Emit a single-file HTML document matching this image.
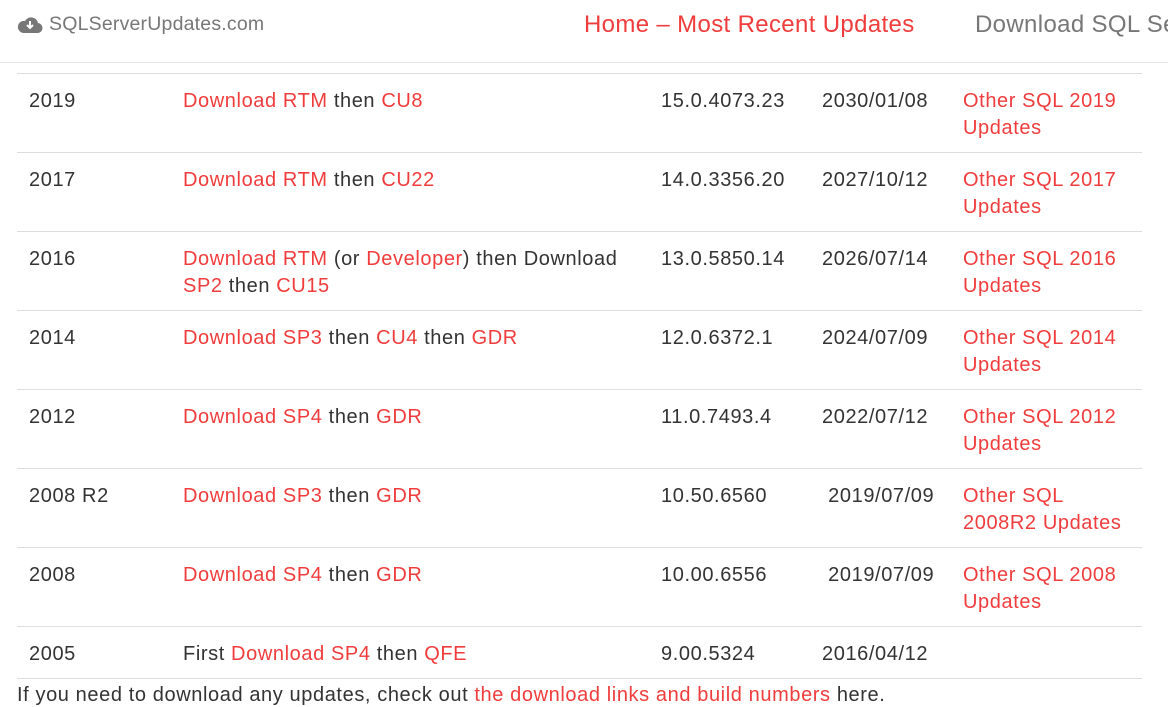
<!DOCTYPE html>
<html><head><meta charset="utf-8"><style>
body{margin:0;width:1168px;height:690px;overflow:hidden;background:#fff;font-family:"Liberation Sans",sans-serif;color:#333;position:relative}
.hdr{position:absolute;left:0;top:0;width:1168px;height:62px;border-bottom:1px solid #e7e7e7}
.logo{position:absolute;left:49px;top:13px;font-size:19.5px;color:#777;letter-spacing:0.2px}
.nav1{position:absolute;left:584px;top:11px;font-size:24px;color:#f03c3c;white-space:nowrap;letter-spacing:0.35px}
.nav2{position:absolute;left:975px;top:11px;font-size:24px;color:#777;white-space:nowrap;letter-spacing:0.35px}
table{position:absolute;left:17px;top:73px;width:1125px;border-collapse:collapse;font-size:20px;line-height:27px;letter-spacing:0.6px}
td{border-top:1px solid #ddd;vertical-align:top;padding:14px 0 10px 12px;box-sizing:border-box}
a{color:#f03c3c;text-decoration:none}
.foot{position:absolute;left:17px;top:684px;font-size:20px;letter-spacing:0.6px;color:#333;white-space:nowrap}
</style></head><body>
<div class="hdr">
<svg style="position:absolute;left:17px;top:15px" width="26" height="20" viewBox="0 0 26 20"><path d="M6 18h14a5 5 0 0 0 1-10 7 7 0 0 0-13-2 6 6 0 0 0-2 12z" fill="#777"/><path d="M13 6v7M10 10l3 3 3-3" stroke="#fff" stroke-width="2" fill="none"/></svg>
<div class="logo">SQLServerUpdates.com</div>
<div class="nav1">Home – Most Recent Updates</div>
<div class="nav2">Download SQL Server</div>
</div>
<table>
<colgroup><col style="width:154px"><col style="width:478px"><col style="width:161px"><col style="width:141px"><col></colgroup>
<tr><td>2019</td><td><a>Download RTM</a> then <a>CU8</a></td><td>15.0.4073.23</td><td>2030/01/08</td><td><a>Other SQL 2019 Updates</a></td></tr>
<tr><td>2017</td><td><a>Download RTM</a> then <a>CU22</a></td><td>14.0.3356.20</td><td>2027/10/12</td><td><a>Other SQL 2017 Updates</a></td></tr>
<tr><td>2016</td><td><a>Download RTM</a> (or <a>Developer</a>) then Download <a>SP2</a> then <a>CU15</a></td><td>13.0.5850.14</td><td>2026/07/14</td><td><a>Other SQL 2016 Updates</a></td></tr>
<tr><td>2014</td><td><a>Download SP3</a> then <a>CU4</a> then <a>GDR</a></td><td>12.0.6372.1</td><td>2024/07/09</td><td><a>Other SQL 2014 Updates</a></td></tr>
<tr><td>2012</td><td><a>Download SP4</a> then <a>GDR</a></td><td>11.0.7493.4</td><td>2022/07/12</td><td><a>Other SQL 2012 Updates</a></td></tr>
<tr><td>2008 R2</td><td><a>Download SP3</a> then <a>GDR</a></td><td>10.50.6560</td><td>&nbsp;2019/07/09</td><td><a>Other SQL 2008R2 Updates</a></td></tr>
<tr><td>2008</td><td><a>Download SP4</a> then <a>GDR</a></td><td>10.00.6556</td><td>&nbsp;2019/07/09</td><td><a>Other SQL 2008 Updates</a></td></tr>
<tr><td style="border-bottom:1px solid #ddd">2005</td><td style="border-bottom:1px solid #ddd">First <a>Download SP4</a> then <a>QFE</a></td><td style="border-bottom:1px solid #ddd">9.00.5324</td><td style="border-bottom:1px solid #ddd">2016/04/12</td><td style="border-bottom:1px solid #ddd"></td></tr>
</table>
<div class="foot">If you need to download any updates, check out <a>the download links and build numbers</a> here.</div>
</body></html>
